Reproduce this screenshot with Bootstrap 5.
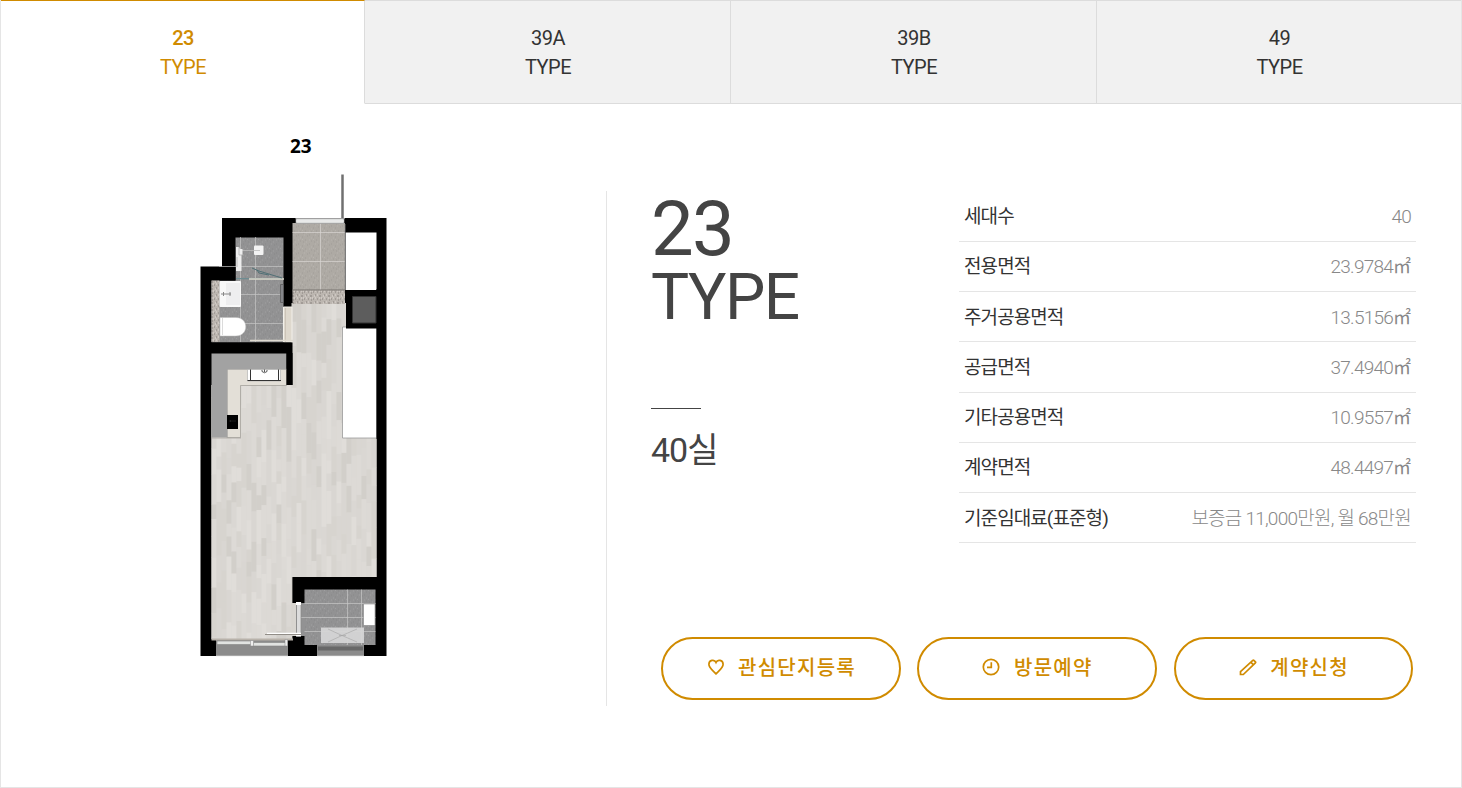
<!DOCTYPE html>
<html lang="ko">
<head>
  <meta charset="UTF-8">
  <meta name="viewport" content="width=device-width, initial-scale=1">
  <title>23 TYPE</title>
  <link href="https://cdn.jsdelivr.net/npm/bootstrap@5.3.3/dist/css/bootstrap.min.css" rel="stylesheet">
  <style>
    body { font-family: Roboto, "Noto Sans CJK KR", sans-serif; color: #333; }
    .type-page { height: 788px; border: 1px solid #e5e5e5; border-top: 0; overflow: hidden; }
    .type-tabs { height: 104px; margin: 0 -1px; }
    .type-tabs .nav-item { flex: 0 0 366px; }
    .type-tabs .nav-item:first-child, .type-tabs .nav-item:last-child { flex-basis: 365px; }
    .type-tabs .nav-link {
      height: 104px; padding: 23px 0 0 1px; border: 1px solid #dcdcdc; border-left-width: 0; border-radius: 0;
      background: #f1f1f1; color: #333; font-size: 20px; line-height: 29px; letter-spacing: -.5px;
    }
    .type-tabs .nav-link.active {
      background: #fff; color: #d08b00;
      border-color: #d08b00 #dcdcdc transparent #e5e5e5; border-left-width: 1px;
    }
    .type-tabs .active b { font-weight: 500; }
    .plan-pane { width: 605px; padding-top: 30px; }
    .plan-name { width: 22px; margin-left: 289px; font: 700 19px/25px "Noto Sans", sans-serif; color: #000; }
    .plan-svg { display: block; margin: 15px 0 0 199px; }
    .info-pane { margin-top: 87px; height: 515px; border-left: 1px solid #e5e5e5; padding-left: 44px; }
    .info-head { width: 308px; color: #444; }
    .type-no { font-size: 76px; line-height: 76px; letter-spacing: -1.6px; }
    .type-word { font-size: 64px; line-height: 62px; letter-spacing: -1.6px; }
    .head-rule { width: 50px; height: 1px; background: #444; margin-top: 79px; }
    .room-count { font-size: 34px; line-height: 48px; letter-spacing: -1px; margin-top: 17px; }
    .spec-list { width: 457px; padding-top: .5px; font-size: 19px; letter-spacing: -.91px; }
    .spec-list li { height: 50.25px; padding: 2.3px 5px 0; border-bottom: 1px solid #e5e5e5; }
    .spec-list span { color: #888; font-weight: 300; letter-spacing: -.76px; }
    .spec-list i { font-style: normal; font-weight: 400; font-size: 18px; line-height: 1; letter-spacing: 0; }
    .action-row { margin: 93.8px 0 0 10px; gap: 16.8px; }
    .btn-gold {
      width: 239.5px; height: 63px; border: 2px solid #d08b00; border-radius: 32px; color: #d08b00;
      font-size: 20px; font-weight: 500; letter-spacing: 1.25px; padding: 0 0 2px 1px;
    }
    .btn-gold svg { margin: -2px 13.5px 0 0; }
  </style>
</head>
<body>
<div class="type-page">
  <ul class="nav nav-tabs type-tabs border-0 flex-nowrap text-center">
    <li class="nav-item"><a class="nav-link active m-0" href="#"><b>23</b><br>TYPE</a></li>
    <li class="nav-item"><a class="nav-link m-0" href="#">39A<br>TYPE</a></li>
    <li class="nav-item"><a class="nav-link m-0" href="#">39B<br>TYPE</a></li>
    <li class="nav-item"><a class="nav-link m-0" href="#">49<br>TYPE</a></li>
  </ul>

  <div class="d-flex">
    <div class="plan-pane flex-shrink-0">
      <div class="plan-name">23</div>
      <svg class="plan-svg" width="188" height="483" viewBox="200 174 188 483">
        <defs>
          <pattern id="speck" width="11" height="9" patternUnits="userSpaceOnUse">
            <path d="M1 1h1M5 3h1M8 6h1M3 7h1M10 2h1M6 8h1" stroke="#444" stroke-opacity=".12"/>
            <path d="M3 4h1M7 1h1M9 8h1M1 6h1M5 5.500h1" stroke="#fff" stroke-opacity=".12"/>
          </pattern>
          <pattern id="granite" width="9" height="7" patternUnits="userSpaceOnUse">
            <rect width="9" height="7" fill="#bcb6b0"/>
            <path d="M0 1h1M4 2h2M7 5h1M2 5h1M5 6h1" stroke="#88827e"/>
            <path d="M2 1h1M6 4h1M0 4h1M8 2h1M4 4h1" stroke="#e0dbd6"/>
          </pattern>
        </defs>
        <path d="M222 218H386.500V656H200.500V266.500H222Z"/>
        <!-- wood floor, boards are filled in by the script -->
        <path fill="#d8d5d1" d="M292.500 303H376.500V577h-84V639h-81V385h81z"/>
        <g id="floor"></g>
        <!-- entrance -->
        <path fill="#aeaaa4" d="M292.500 223H345v67h-52.500z"/>
        <path fill="url(#speck)" d="M292.500 223H345v67h-52.500z"/>
        <path d="M320.500 223v67M292.500 232.500H345M292.500 261.500H345" stroke="#d8d6d2" stroke-width=".7"/>
        <path fill="url(#granite)" d="M292.500 290H345v14h-52.500z"/>
        <path d="M292.500 290H345" stroke="#77736e"/>
        <path fill="#fff" d="M295.500 217H345v1.500h-49.500z"/>
        <path fill="#dcdedd" stroke="#999" stroke-width=".7" d="M296 218.500h48v5h-48z"/>
        <path d="M296 221h48" stroke="#f5f5f5"/>
        <path d="M342.500 174.500V218" stroke="#707070" stroke-width="2.500"/>
        <path fill="#fff" d="M345.500 232.500h31v57.500h-31z"/>
        <path d="M345.200 224v66" stroke="#777" stroke-width=".7"/>
        <path fill="#fff" stroke="#999" stroke-width=".8" d="M342.500 327h34V438h-34z"/>
        <path d="M346 290h31v38.500h-31zM376.500 289h6v150h-6z"/>
        <path fill="#5d5d5d" stroke="#333" d="M352.500 296.500H376v26.500h-23.500z"/>
        <!-- bathroom -->
        <path fill="#929293" d="M235.500 237.500h48V342.500h-72V280.500h24z"/>
        <path fill="url(#speck)" d="M235.500 237.500h48V342.500h-72V280.500h24z"/>
        <path d="M240.500 237v105M255.500 237v105M219 266.500h64M219 294.500h64M219 323.500h64" stroke="#c5c5c5" stroke-width=".7"/>
        <path d="M211 267h24.500v13.500H211z"/>
        <path fill="url(#granite)" d="M211.500 280.500h8v61.500h-8z"/>
        <path d="M236 278.700h47.500" stroke="#6e8c91" stroke-width="1.200"/>
        <path d="M249 279h35" stroke="#ddd8cb" stroke-width="1.300"/>
        <path d="M252 268l7 3 23 7M257 270l2 3 10 2" fill="none" stroke="#496c72" stroke-width=".9"/>
        <rect x="254" y="245.500" width="9.500" height="9.500" rx="1" fill="#f3f3f3"/>
        <path d="M242 250.500h18" stroke="#bbb" stroke-width=".8"/>
        <path fill="#eee" d="M236 247h3l1 2h2.500v6h-1V271H236z"/>
        <path d="M239 247v8h5M237 257v10" stroke="#aaa" stroke-width=".7" fill="none"/>
        <rect x="219.500" y="281" width="21.500" height="26" rx="1" fill="#f8f8f8"/>
        <path d="M226 283h14v22h-14z" fill="#eeeeef"/>
        <path d="M221 294h10M223.500 292v4M230 292v4" stroke="#888" stroke-width="1"/>
        <path fill="#fff" stroke="#bbb" stroke-width=".5" d="M220 317.500h16c13 0 13 18.500 0 18.500h-16z"/>
        <path d="M222.500 318v17" stroke="#ccc" stroke-width=".7"/>
        <path fill="#85868a" stroke="#555" stroke-width=".7" d="M280.500 284.500h3v18h-3z"/>
        <path fill="#ded8cd" stroke="#f2f0ea" d="M283.500 307h8.500v35h-8.500z"/>
        <path d="M285.500 308v34" stroke="#bfb7aa" stroke-width=".6"/>
        <path d="M250 340.500h43" stroke="#ded9d0" stroke-width="1.500"/>
        <!-- kitchen -->
        <path d="M201 342.500h91.500V385h-6v-31.500H201z"/>
        <path fill="#e3dfd7" stroke="#9c9994" stroke-width=".7" d="M227 369h59.500v16.500H240.500V437.500H227z"/>
        <path fill="#a2a2a2" d="M211.500 353.500h75v16H227.500v68h-16z"/>
        <path fill="#fff" stroke="#aaa" stroke-width=".6" d="M247.500 369.500h33v11.500h-33z"/>
        <path d="M250.500 369.500v11M278.500 369.500v11M247.500 380.500h33.500" fill="none" stroke="#333" stroke-width="1"/>
        <path d="M262 370v1.500q2.500 2.500 5 0V370M264.500 369.500v2.500" stroke="#333" stroke-width=".8" fill="none"/>
        <path d="M227 415h11v14h-11zM286.500 353h6v32h-6z"/>
        <path d="M229 421h7M230.500 420v2" stroke="#333" stroke-width=".5"/>
        <path d="M212 438h29" stroke="#a9a6a1" stroke-width=".8"/>
        <!-- utility room -->
        <path d="M292.500 577H377v12.500h-72.500V603h-12zM292.500 636h12v20h-12z"/>
        <path fill="#929293" d="M304.500 589.500h71V645h-71z"/>
        <path fill="url(#speck)" d="M304.500 589.500h71V645h-71z"/>
        <path fill="#929293" d="M301 603h4v33h-4z"/>
        <path d="M347.500 589.500V645M361.500 589.500V645M304.500 603.500h71M301 617.500h74.500M304.500 631.500h71" stroke="#c7c7c7" stroke-width=".7"/>
        <path fill="#fff" stroke="#777" stroke-width=".5" d="M363.500 604h11.500v21.500h-11.500z"/>
        <path fill="#d5d5d5" fill-opacity=".95" d="M321 627.500h43V643h-43z"/>
        <path d="M328 629l14 6.500 15-6.500M328 642l14-6.500 15 6.500M339 635.500h7" stroke="#a5a5a5" stroke-width=".6" fill="none"/>
        <path fill="#dcdcdc" stroke="#888" stroke-width=".7" d="M296.500 602.500h4.500v33.500h-4.500z"/>
        <path fill="#fff" d="M296 602h5v3h-5zM296 633.500h5v3h-5z"/>
        <path d="M265 634.500h36" stroke="#918d87"/>
        <path d="M267 633.400h34" stroke="#fff" stroke-width="1.300"/>
        <!-- windows -->
        <path fill="#8b8b8b" d="M216 639.500h72V656h-72zM317 645h47v11h-47z"/>
        <path fill="#b8b2aa" d="M211.500 638.500H293v2h-81.500z"/>
        <path fill="#e1e3e1" stroke="#858585" stroke-width=".6" d="M217 641h36v3.500h-36zM253 642.500h34v3.500h-34z"/>
        <path fill="#eee" stroke="#888" stroke-width=".5" d="M250.500 640.500h3v5.500h-3zM285 639.500h2.500v6.500H285z"/>
        <path fill="#686868" d="M318 646.500h45v4h-45z"/>
        <path d="M216 655.700h72M317 655.700h47" stroke="#bbb" stroke-width=".7"/>
      </svg>
    </div>

    <div class="info-pane flex-grow-1">
      <div class="d-flex">
        <div class="info-head">
          <div class="type-no">23</div>
          <div class="type-word">TYPE</div>
          <div class="head-rule"></div>
          <div class="room-count">40실</div>
        </div>
        <ul class="spec-list list-unstyled mb-0">
          <li class="d-flex align-items-center justify-content-between">세대수<span>40</span></li>
          <li class="d-flex align-items-center justify-content-between">전용면적<span>23.9784<i>㎡</i></span></li>
          <li class="d-flex align-items-center justify-content-between">주거공용면적<span>13.5156<i>㎡</i></span></li>
          <li class="d-flex align-items-center justify-content-between">공급면적<span>37.4940<i>㎡</i></span></li>
          <li class="d-flex align-items-center justify-content-between">기타공용면적<span>10.9557<i>㎡</i></span></li>
          <li class="d-flex align-items-center justify-content-between">계약면적<span>48.4497<i>㎡</i></span></li>
          <li class="d-flex align-items-center justify-content-between">기준임대료(표준형)<span>보증금 11,000만원, 월 68만원</span></li>
        </ul>
      </div>
      <div class="action-row d-flex">
        <a class="btn btn-gold d-flex align-items-center justify-content-center" href="#">
          <svg width="18" height="18" viewBox="0 0 18 18" fill="none" stroke="currentColor" stroke-width="1.700"><path d="M9 4.300C7.700 1.200 1.900 1.600 1.900 6.300c0 3.700 3.800 6 7.100 9.500 3.300-3.500 7.100-5.800 7.100-9.500C16.100 1.600 10.300 1.200 9 4.300z"/></svg>관심단지등록
        </a>
        <a class="btn btn-gold d-flex align-items-center justify-content-center" href="#">
          <svg width="18" height="18" viewBox="0 0 18 18" fill="none" stroke="currentColor" stroke-width="1.700"><circle cx="9" cy="9" r="7.700"/><path d="M9.300 4.300v5H5"/></svg>방문예약
        </a>
        <a class="btn btn-gold d-flex align-items-center justify-content-center" href="#">
          <svg width="18" height="18" viewBox="0 0 18 18" fill="none" stroke="currentColor" stroke-width="1.700"><path d="M1.500 16.500v-2.900L13.800 2.300q.6-.5 1.100 0l1.500 1.500q.5.500 0 1L4.300 16.500zM12 4.300l2.500 2.500"/></svg>계약신청
        </a>
      </div>
    </div>
  </div>
</div>

<script src="https://cdn.jsdelivr.net/npm/bootstrap@5.3.3/dist/js/bootstrap.bundle.min.js"></script>
<script>
  // Lay the floor boards column by column, each with a slightly different shade
  const shades = ["#dad7d3", "#dddad6", "#d7d4cf", "#e0ddd9", "#d9d6d2", "#d2cfca", "#dcd9d5"];
  let seed = 23;
  const rand = () => (seed = (seed * 16807) % 2147483647) / 2147483647;

  let boards = "";
  for (let x = 211.5; x < 376; x += 5) {
    const top = x > 291 ? 303 : 385;
    const bottom = x < 291 ? 639 : 577;
    let y = top;
    while (y < bottom) {
      const h = Math.min(12 + rand() * 22, bottom - y);
      const w = Math.min(5.2, 376.5 - x);
      boards += `<rect x="${x}" y="${y}" width="${w}" height="${h + .3}" fill="${shades[Math.floor(rand() * shades.length)]}"/>`;
      y += h;
    }
  }
  document.getElementById("floor").innerHTML = boards + '<path fill="#d8d5d0" d="M291 577h1.500v62H291zM292.500 603h4v33h-4z"/>';
</script>
</body>
</html>
